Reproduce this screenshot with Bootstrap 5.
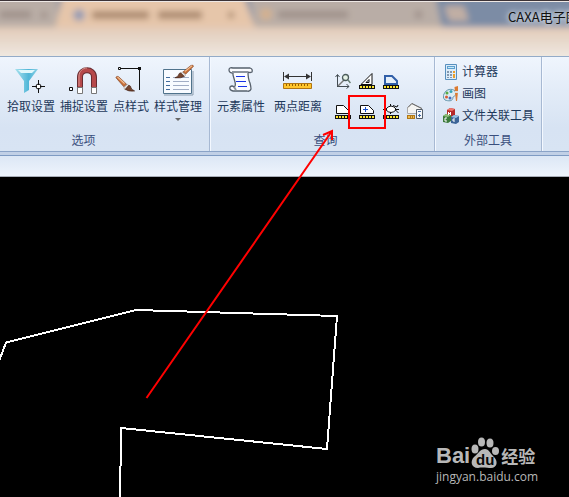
<!DOCTYPE html>
<html lang="zh-CN">
<head>
<meta charset="utf-8">
<meta name="viewport" content="width=device-width, initial-scale=1">
<title>CAXA电子图板</title>
<link href="https://cdn.jsdelivr.net/npm/bootstrap@5.3.0/dist/css/bootstrap.min.css" rel="stylesheet">
<style>
  body { font-family: "Noto Sans", "Noto Sans CJK SC", sans-serif; font-size: 12px; line-height: 16px; color: #1e395b; background: #000; }
  .titlebar { height: 57px; border-top: 1px solid #3c3337; border-bottom: 1px solid #93abc8; background: #f7f5f2; }
  .app-name { padding: 6px 0 0 508px; font-size: 13px; line-height: 20px; color: #111; text-shadow: 0 0 5px #fff, 0 0 8px #dfe8f4; font-family: "Noto Sans CJK SC", sans-serif; }
  .ribbon { height: 94px; background: linear-gradient(#eff5fd, #e3ecf8 35%, #d7e3f3 75%, #d8e4f3); }
  .ribbon-group { border-right: 1px solid #a7b9d3; box-shadow: 1px 0 #f3f8ff; padding-top: 7px; }
  .group-options { width: 210px; padding-left: 7px; }
  .group-query { width: 225px; padding-left: 7px; }
  .group-tools { width: 107px; padding-top: 4px; }
  .group-caption { height: 20px; line-height: 20px; color: #3a4f7d; }
  .group-options .group-caption { padding-right: 49px; }
  .group-query .group-caption { padding-right: 7px; }
  .tool-main { height: 67px; }
  .group-options .tool-main { gap: 5px; }
  .group-query .tool-main { gap: 9px; }
  .group-tools .tool-main { height: 70px; }
  .tool { border: 0; background: none; color: inherit; padding: 0; white-space: nowrap; }
  .tool-label { height: 22px; line-height: 22px; }
  .small-tools { display: grid; grid-template-columns: repeat(4, 24px); grid-auto-rows: 30px; padding-top: 2px; }
  .tool-row { height: 22px; padding-left: 8px; gap: 3px; }
  .ribbon-edge { height: 5px; background: #c1d0e6; border-top: 1px solid #8aa3c7; border-bottom: 1px solid #7e9bc3; }
  .tab-strip { height: 21px; background: linear-gradient(#dce7f5, #eef4fc); border-bottom: 1px solid #a8aeb8; }
  .drawing { background: #000; min-height: 0; }
  .watermark { right: 33px; bottom: 12px; color: #b8b8b8; width: 100px; }
  .brand { height: 32px; }
  .brand-latin { font: bold 22px/26px "Liberation Sans", sans-serif; }
  .brand-cn { font: bold 17px/26px "Noto Sans CJK SC", sans-serif; padding-left: 1px; }
  .site { font: 12px/16px "Open Sans", sans-serif; }
  svg { display: block; flex-shrink: 0; }
</style>
<script src="https://cdn.jsdelivr.net/npm/bootstrap@5.3.0/dist/js/bootstrap.bundle.min.js"></script>
</head>
<body class="vh-100 overflow-hidden position-relative d-flex flex-column">

<svg width="0" height="0" class="position-absolute" aria-hidden="true">
  <defs>
    <g id="scale" shape-rendering="crispEdges"><path fill="#111" d="M0 12h16v4H0z"/><path fill="#ffe72e" d="M1 13h2v2H1zM4 13h2v2H4zM7 13h2v2H7zM10 13h2v2h-2zM13 13h2v2h-2z"/></g>
    <g id="brush"><path d="M15 7 26 -2Q29 -4 30 -1L19 10Z" fill="#c9713b" stroke="#70361b" stroke-width=".7"/><path d="M18 6 28-2" stroke="#f5c79c" stroke-width="1.4"/><path d="m14 7 5 4-2 3-5-5z" fill="#e9e3df" stroke="#8b8179" stroke-width=".6"/><path d="m12 8 5 5Q13 16 4 15 9 13 9 11 9 9 12 8z" fill="#76452e" stroke="#3b1c12" stroke-width=".8"/></g>
  </defs>
</svg>

<header class="titlebar flex-shrink-0 position-relative overflow-hidden">
  <svg class="position-absolute top-0 start-0 w-100 h-100" aria-hidden="true">
    <defs>
      <filter id="haze" x="-5%" y="-20%" width="110%" height="140%"><feGaussianBlur stdDeviation="3"/></filter>
      <linearGradient id="fade" x2="0" y2="1"><stop stop-color="#e3cbb8"/><stop offset=".3" stop-color="#e7d9cc"/><stop offset=".75" stop-color="#f4f0eb"/><stop offset="1" stop-color="#f9f7f4"/></linearGradient>
    </defs>
    <g filter="url(#haze)">
      <path fill="#7b8ca5" d="M-20-20h2000v50H-20z"/>
      <path fill="#b9ada6" d="M-20-20H58V30H-20zM246-20h186L443 30H256z"/>
      <path fill="#e6c6aa" d="M55 28 66-20H238L256 28z"/>
      <path fill="#c1afa4" d="M444 5h20l5 15h-20z"/>
      <path fill="url(#fade)" d="M-20 26h2000v50H-20z"/>
      <path fill="#8f8179" d="M0 10h31v7H0zM41 11h6v6h-6zM278 10h70v7h-70zM415 10h7v7h-7z" opacity=".65"/>
      <path fill="#a17f66" d="M92 10h57v8H92zM158 10h44v8h-44zM228 11h6v6h-6z" opacity=".85"/>
      <circle cx="79" cy="14" r="6" fill="#969cb4"/>
      <circle cx="266" cy="13" r="6" fill="#d4b18f"/>
    </g>
    <path d="M0 .5h2000" stroke="#eee8e5"/>
  </svg>
  <div class="app-name position-relative text-nowrap">CAXA电子图</div>
</header>

<main class="d-flex flex-column flex-grow-1">
<div class="ribbon d-flex flex-shrink-0" role="toolbar" aria-label="工具">
  <section class="ribbon-group group-options flex-shrink-0">
    <div class="tool-main d-flex">
      <button class="tool d-flex flex-column align-items-center" type="button">
        <svg width="32" height="32" viewBox="0 0 32 32"><defs><linearGradient id="fu"><stop stop-color="#a9e2ee"/><stop offset=".6" stop-color="#4fb5d7"/><stop offset="1" stop-color="#8fd2e6"/></linearGradient></defs><path d="M0 5h23L14 17v9l-5 3V17z" fill="url(#fu)"/><path d="M3 6h17l-3 3H6z" fill="#e0f7fb"/><circle cx="23.5" cy="22.5" r="2.500" fill="#fff" stroke="#111"/><path d="M23.500 16v5M23.500 24v5M17 22.500h5M25 22.500h5" stroke="#111"/></svg>
        <span class="tool-label">拾取设置</span>
      </button>
      <button class="tool d-flex flex-column align-items-center" type="button">
        <svg width="32" height="32" viewBox="0 0 32 32"><path d="M12 27V13c0-9 14-9 14 0v14" fill="none" stroke="#672c31" stroke-width="6"/><path d="M12 27V13c0-9 14-9 14 0v14" fill="none" stroke="#b6494b" stroke-width="4"/><path d="M11 22V12c0-5 4-8 8-8" fill="none" stroke="#dc9791"/><path d="M9.500 23.500h5v6h-5zM23.500 23.500h5v6h-5z" fill="#fff" stroke="#777"/><path d="M1.500 23.500h3v3h-3z" fill="#fff" stroke="#111"/></svg>
        <span class="tool-label">捕捉设置</span>
      </button>
      <button class="tool d-flex flex-column align-items-center" type="button">
        <svg width="32" height="32" viewBox="0 0 32 32"><path d="M4 4.500h19M24.500 5v21" stroke="#111"/><path d="M3.500 3.500h2v2h-2z" fill="#fff" stroke="#111"/><path d="M23 3h3v3h-3z" fill="#111"/><g transform="matrix(-.72 0 0 .83 22.5 14.5)"><use href="#brush"/></g></svg>
        <span class="tool-label">点样式</span>
      </button>
      <button class="tool d-flex flex-column align-items-center" type="button">
        <svg width="32" height="32" viewBox="0 0 32 32"><path d="M2 31h29V7" fill="none" stroke="#8b9cad"/><path d="M1.500 5.500h28v24h-28z" fill="#f8fbff" stroke="#50738c"/><path d="M4 13.500h4M4 17.500h4M4 21.500h4M4 25.500h4" stroke="#426c9e"/><path d="M11 13.500h16M11 17.500h16M11 21.500h16M11 25.500h16" stroke="#a1adc5"/><g transform="translate(10 3) scale(.72)"><use href="#brush"/></g></svg>
        <span class="tool-label">样式管理</span>
        <svg width="6" height="3" viewBox="0 0 6 3"><path d="M0 0h6L3 3z" fill="#666"/></svg>
      </button>
    </div>
    <div class="group-caption text-center">选项</div>
  </section>

  <section class="ribbon-group group-query flex-shrink-0">
    <div class="tool-main d-flex">
      <button class="tool d-flex flex-column align-items-center" type="button">
        <svg width="32" height="32" viewBox="0 0 32 32"><path d="M8 4h17q3 1 2 4-2 1-4 0 0 7 2 11 1 4 1 6-1 3-4 2H8q-4-1-3-4 2-2 4 0 2-1 1-5L8 11V9Q4 9 4 6t4-2z" fill="#fbfcff" stroke="#56606c" stroke-width="1.3"/><path d="M7 8h16M9 23l2 3" stroke="#8d959f" stroke-width="2"/><path d="M11 12.500h9M11 17.500h10M13 22.500h9" stroke="#1733e7"/></svg>
        <span class="tool-label">元素属性</span>
      </button>
      <button class="tool d-flex flex-column align-items-center" type="button">
        <svg width="32" height="32" viewBox="0 0 32 32"><path d="M1.500 8v9M29.500 8v9M3 12.500h25" stroke="#333"/><path d="m2 12.500 5-3v6zM29 12.500l-5-3v6z" fill="#333"/><path d="M1.500 19.500h28v5h-28z" fill="#ffc52c" stroke="#b17511"/><path d="M4.500 20v2M7.500 20v2M10.500 20v2M13.500 20v2M16.500 20v2M19.500 20v2M22.500 20v2M25.500 20v2" stroke="#956000"/></svg>
        <span class="tool-label">两点距离</span>
      </button>
      <div class="small-tools">
        <button class="tool d-flex align-items-center justify-content-center" type="button" aria-label="坐标"><svg width="16" height="16" viewBox="0 0 16 16"><path d="M2.500 14V2M.500 4l2-2.500 2 2.500M2 13.500h12M11.500 11l2.500 2.500-2.500 2" fill="none" stroke="#424b51"/><path d="m3 13 6-6" stroke="#777" stroke-width="1.500"/><circle cx="10.500" cy="4.500" r="3" fill="#e5f2e6" stroke="#4c5c5b" stroke-width="1.300"/><path d="m13 7 2.500 3" stroke="#657b70" stroke-width="1.500"/></svg></button>
        <button class="tool d-flex align-items-center justify-content-center" type="button" aria-label="角度"><svg width="16" height="16" viewBox="0 0 16 16"><path d="m2 11.500 11-11v11z" fill="#fff" stroke="#111"/><path d="m7 9.500 3-3v3z" fill="#dae6f6" stroke="#111"/><use href="#scale"/></svg></button>
        <button class="tool d-flex align-items-center justify-content-center" type="button" aria-label="周长"><svg width="16" height="16" viewBox="0 0 16 16"><path d="M2 3h7l5 5v3H2z" fill="#e5effa" stroke="#315fa8" stroke-width="2"/><use href="#scale"/></svg></button>
        <span></span>
        <button class="tool d-flex align-items-center justify-content-center" type="button" aria-label="面积"><svg width="16" height="16" viewBox="0 0 16 16"><path d="M1.500 2.500h7l5 5v3h-12z" fill="#fff" stroke="#111"/><use href="#scale"/></svg></button>
        <button class="tool d-flex align-items-center justify-content-center" type="button" aria-label="重心"><svg width="16" height="16" viewBox="0 0 16 16"><path d="M1.500 2.500h8l5 5v3h-13z" fill="#fff" stroke="#111"/><path d="M6.500 4v5M4 6.500h5" stroke="#1750ca"/><use href="#scale"/></svg></button>
        <button class="tool d-flex align-items-center justify-content-center" type="button" aria-label="惯性矩"><svg width="16" height="16" viewBox="0 0 16 16"><path d="M2.500 6.500q5.500-7 11 0-5.500 6-11 0z" fill="#fff" stroke="#111"/><path d="M0 6.500h4M7.500 1v2M7.500 9v2M12 6.500h4M10 2.500l4 1.500 1-2M15.500 10l-3-3" stroke="#111" fill="none"/><use href="#scale"/></svg></button>
        <button class="tool d-flex align-items-center justify-content-center" type="button" aria-label="重量"><svg width="16" height="16" viewBox="0 0 16 16"><path d="M.5 10.500V4.500l4-4 10 5v5z" fill="#f4f4f2" stroke="#aaa"/><path d="m1 4.500 4-4 10 5" fill="none" stroke="#666"/><path d="M0 12h8v4H0z" fill="#b07818"/><path d="M1 13h2v2H1zM4 13h1v2H4zM6 13h1v2H6z" fill="#efbd51"/><path d="M9.500 6.500h6v9h-6z" fill="#f6f8fa" stroke="#555e68"/><path d="M11 8.500h3M11 12.500h3M12.500 11v3" stroke="#426ca5"/></svg></button>
      </div>
    </div>
    <div class="group-caption text-center pe-0">查询</div>
  </section>

  <section class="ribbon-group group-tools flex-shrink-0">
    <div class="tool-main">
      <button class="tool tool-row d-flex align-items-center" type="button">
        <svg width="16" height="16" viewBox="0 0 16 16"><path d="M2.500.5h11v15h-11z" fill="#dcecf9" stroke="#5890be"/><path d="M4 2h8v3H4z" fill="#5e9fcf"/><path d="M5 3h6v1H5z" fill="#c9ecf8"/><path d="M4 7h2v2H4zM7 7h2v2H7zM4 10h2v2H4zM7 10h2v2H7zM4 13h2v1H4zM7 13h2v1H7z" fill="#8498ae"/><path d="M10 7h2v2h-2zM10 10h2v4h-2z" fill="#ed9e28"/></svg>
        <span>计算器</span>
      </button>
      <button class="tool tool-row d-flex align-items-center" type="button">
        <svg width="16" height="16" viewBox="0 0 16 16"><path d="M1 8c2-5 8-6 11-3 3 4-1 5-2 6 0 5-5 4-8 3-2-2-2-4-1-6z" fill="#dcecf3" stroke="#6294ac"/><circle cx="4" cy="7" r="1.5" fill="#58a947"/><circle cx="8" cy="5.5" r="1.5" fill="#35a3b8"/><circle cx="3.5" cy="11" r="1.5" fill="#db5a36"/><circle cx="7" cy="12" r="1.5" fill="#4669bb"/><path d="M11.500 1 15 0v6l-1 9h-1l-1-8z" fill="#dc7b32"/><path d="M12 5h3v2h-3z" fill="#ddd"/></svg>
        <span>画图</span>
      </button>
      <button class="tool tool-row d-flex align-items-center" type="button">
        <svg width="16" height="16" viewBox="0 0 16 16"><path d="m4 2 3-2 5 1v6l-3 2-5-1z" fill="#b52929"/><path d="m4 2 3-2 5 1-3 2z" fill="#ef776c"/><path d="m0 8 3-2 5 1v6l-3 2-5-1z" fill="#3c7b3b"/><path d="m0 8 3-2 5 1-3 2z" fill="#8ebe78"/><path d="m8 9 3-2 5 1v6l-3 2-5-1z" fill="#3b6497"/><path d="m8 9 3-2 5 1-3 2z" fill="#96c1e4"/><path d="M5.500 4v3M7.500 4v3M5 5.500h3M4 10H2v3h2M12 11h-2v2h2" fill="none" stroke="#fff"/></svg>
        <span>文件关联工具</span>
      </button>
    </div>
    <div class="group-caption text-center">外部工具</div>
  </section>
</div>
<div class="ribbon-edge flex-shrink-0"></div>
<div class="tab-strip flex-shrink-0"></div>

<div class="drawing flex-grow-1 position-relative overflow-hidden">
  <svg class="position-absolute top-0 start-0 w-100 h-100" role="img" aria-label="多边形轮廓" shape-rendering="crispEdges">
    <path d="M-1 184 6 165.500 136 133 337 139 327 272 121 251 120 330" fill="none" stroke="#fff" stroke-width="2"/>
  </svg>
  <div class="watermark position-absolute">
    <div class="brand d-flex align-items-end text-nowrap">
      <span class="brand-latin">Bai</span>
      <svg width="30" height="32" viewBox="0 0 28 32"><g fill="#b8b8b8"><ellipse cx="4" cy="12" rx="3.5" ry="4.5"/><ellipse cx="10.500" cy="5" rx="3.500" ry="4.500"/><ellipse cx="19" cy="6" rx="3.500" ry="4.500"/><ellipse cx="24.500" cy="14" rx="3.500" ry="4"/><path d="M14 12c4 0 5 4 8 7 6 5 4 12-2 12-3 0-9-1-13 0-7 0-8-7-4-11 5-4 6-8 11-8z"/></g><text x="5" y="28" font-family="Liberation Sans, sans-serif" font-size="15" font-weight="bold" fill="#080808">du</text></svg>
      <span class="brand-cn">经验</span>
    </div>
    <div class="site">jingyan.baidu.com</div>
  </div>
</div>
</main>

<svg class="position-absolute top-0 start-0 w-100 h-100 pe-none" aria-hidden="true">
  <path d="M349 96h36v32h-36z" fill="none" stroke="#f00" stroke-width="2"/>
  <path d="M146.500 398 332 131M323 135l9-4v9" fill="none" stroke="#f00" stroke-width="2"/>
</svg>
</body>
</html>
